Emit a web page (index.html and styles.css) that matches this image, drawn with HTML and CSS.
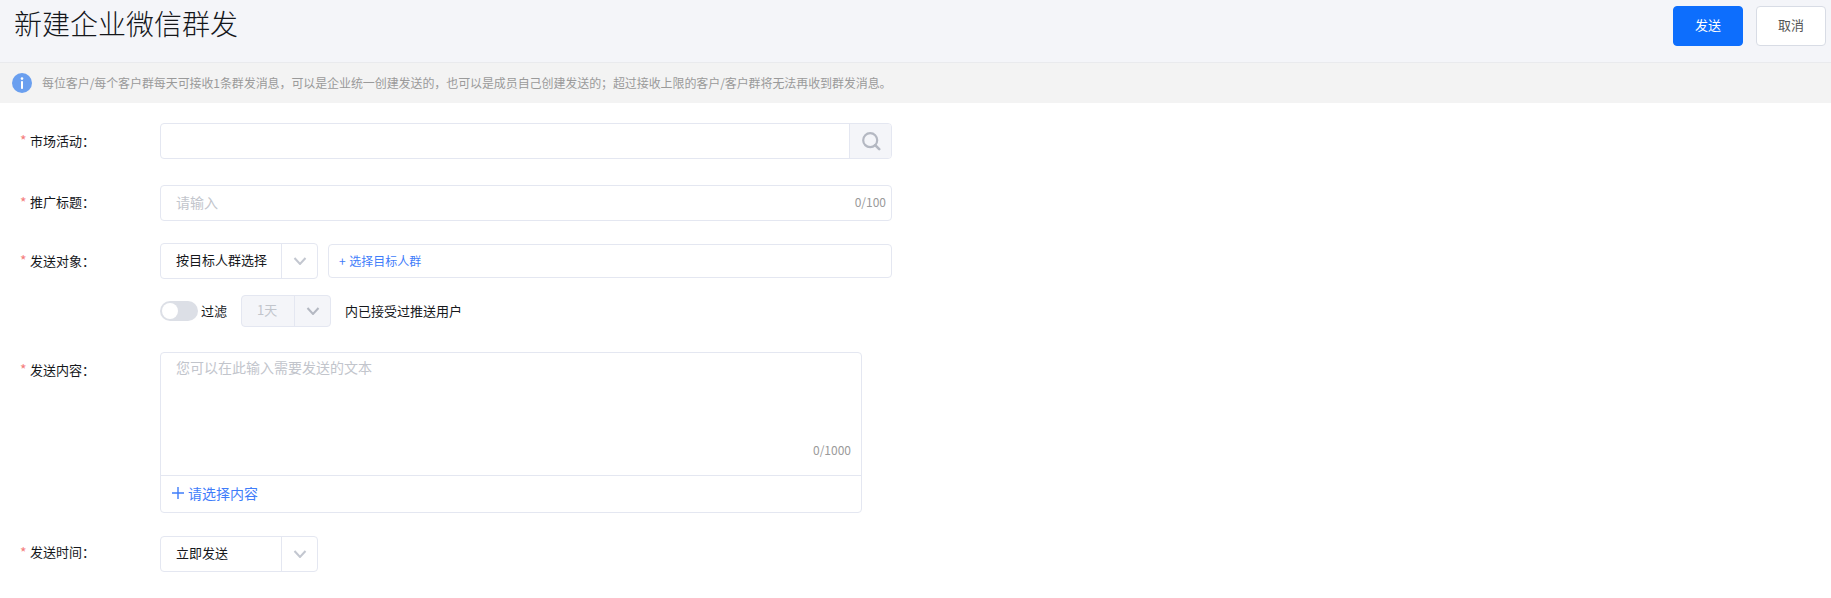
FILE: index.html
```html
<!DOCTYPE html>
<html lang="zh-CN">
<head>
<meta charset="utf-8">
<title>新建企业微信群发</title>
<link rel="stylesheet" href="styles.css">
</head>
<body>
<header class="page-header">
  <h1 class="page-title">新建企业微信群发</h1>
  <div class="header-actions">
    <button class="btn btn-primary" type="button">发送</button>
    <button class="btn btn-default" type="button">取消</button>
  </div>
</header>
<div class="notice">
  <svg class="notice-icon" viewBox="0 0 20 20" width="20" height="20" aria-hidden="true">
    <circle cx="10" cy="10" r="10" fill="#6a9fef"/>
    <circle cx="10" cy="5.6" r="1.3" fill="#fff"/>
    <rect x="9" y="8.2" width="2" height="7.6" fill="#fff"/>
  </svg>
  <span>每位客户/每个客户群每天可接收1条群发消息，可以是企业统一创建发送的，也可以是成员自己创建发送的；超过接收上限的客户/客户群将无法再收到群发消息。</span>
</div>
<main class="form">
  <div class="row row-activity">
    <label class="label"><i class="star">*</i>市场活动：</label>
    <div class="field field-wide search">
      <div class="search-input"></div>
      <div class="search-btn">
        <svg viewBox="0 0 20 20" width="20" height="20" aria-hidden="true">
          <circle cx="9.2" cy="9.2" r="7" fill="none" stroke="#b4b8c2" stroke-width="2.2"/>
          <path d="M14.2 14.2l4 4" stroke="#b4b8c2" stroke-width="2.6" stroke-linecap="round"/>
        </svg>
      </div>
    </div>
  </div>
  <div class="row row-title">
    <label class="label label-up"><i class="star">*</i>推广标题：</label>
    <div class="field field-wide text-input">
      <span class="placeholder">请输入</span>
      <span class="count">0/100</span>
    </div>
  </div>
  <div class="row row-target">
    <label class="label"><i class="star">*</i>发送对象：</label>
    <div class="target-fields">
      <div class="select select-md">
        <span class="select-value">按目标人群选择</span>
        <span class="select-arrow"><svg viewBox="0 0 14 8" width="14" height="8" aria-hidden="true"><path d="M1.5 1l5.5 6 5.5-6" fill="none" stroke="#c3c7d0" stroke-width="2"/></svg></span>
      </div>
      <div class="target-picker">+ 选择目标人群</div>
    </div>
  </div>
  <div class="row row-filter">
    <div class="label"></div>
    <div class="filter-fields">
      <span class="switch"><span class="switch-knob"></span></span>
      <span class="filter-text">过滤</span>
      <div class="select select-disabled">
        <span class="select-value">1天</span>
        <span class="select-arrow"><svg viewBox="0 0 14 8" width="14" height="8" aria-hidden="true"><path d="M1.5 1l5.5 6 5.5-6" fill="none" stroke="#b4b8c2" stroke-width="2"/></svg></span>
      </div>
      <span class="filter-tail">内已接受过推送用户</span>
    </div>
  </div>
  <div class="row row-content">
    <label class="label label-top"><i class="star">*</i>发送内容：</label>
    <div class="content-box">
      <div class="content-text">
        <span class="placeholder">您可以在此输入需要发送的文本</span>
        <span class="count count-content">0/1000</span>
      </div>
      <div class="content-add">
        <svg viewBox="0 0 12 12" width="12" height="12" aria-hidden="true"><path d="M6 0v12M0 6h12" stroke="#3f7dfa" stroke-width="1.4"/></svg>
        <span>请选择内容</span>
      </div>
    </div>
  </div>
  <div class="row">
    <label class="label label-last"><i class="star">*</i>发送时间：</label>
    <div class="select select-md">
      <span class="select-value">立即发送</span>
      <span class="select-arrow"><svg viewBox="0 0 14 8" width="14" height="8" aria-hidden="true"><path d="M1.5 1l5.5 6 5.5-6" fill="none" stroke="#c3c7d0" stroke-width="2"/></svg></span>
    </div>
  </div>
</main>
</body>
</html>
```
FILE: styles.css
```css
* { box-sizing: border-box; }
html, body { margin: 0; padding: 0; }
body {
  background: #fff;
  color: #16181c;
  font-family: "Noto Sans CJK SC", "Liberation Sans", sans-serif;
  font-size: 13px;
  width: 1831px;
  height: 598px;
  overflow: hidden;
}
.page-header {
  height: 63px;
  background: #f4f5f9;
  border-bottom: 1px solid #e9eaed;
  display: flex;
  justify-content: space-between;
  align-items: flex-start;
  padding: 6px 5px 0 14px;
}
.page-title {
  margin: 2px 0 0;
  font-size: 28px;
  font-weight: 300;
  line-height: 30px;
  color: #15171b;
}
.header-actions { display: flex; gap: 13px; }
.btn {
  width: 70px;
  height: 40px;
  border-radius: 4px;
  font: inherit;
  font-size: 13px;
  padding: 0 0 4px;
}
.btn-primary { background: #0d6efd; border: 1px solid #0d6efd; color: #fff; }
.btn-default { background: #fff; border: 1px solid #d8dce5; color: #555; }
.notice {
  height: 40px;
  background: #f3f3f3;
  display: flex;
  align-items: center;
  gap: 10px;
  padding-left: 12px;
  font-size: 12px;
  letter-spacing: -0.09px;
  color: #9a9a9a;
  white-space: nowrap;
}
.notice span { padding-bottom: 2px; }
.notice-icon { flex: none; }
.form { padding-top: 20px; }
.row { display: flex; align-items: center; }
.row-activity { margin-bottom: 26px; }
.row-title { margin-bottom: 22px; }
.row-target { margin-bottom: 16px; }
.row-filter { margin-bottom: 25px; }
.row-content { margin-bottom: 23px; align-items: flex-start; }
.label {
  width: 160px;
  flex: none;
  padding: 0 0 2px 20px;
  font-size: 13px;
  display: flex;
  align-items: center;
}
.label-up { padding-bottom: 3px; }
.label-top { padding-top: 7px; padding-bottom: 0; }
.label-last { padding-bottom: 5px; }
.star {
  width: 10px;
  font-style: normal;
  color: #f47c7c;
  font-size: 14px;
}
.field-wide {
  width: 732px;
  height: 36px;
  border: 1px solid #e4e7f1;
  border-radius: 4px;
  display: flex;
  align-items: center;
}
.search { overflow: hidden; }
.search-input { flex: 1; }
.search-btn {
  width: 42px;
  height: 100%;
  background: #f4f5f9;
  border-left: 1px solid #e4e7f1;
  display: flex;
  align-items: center;
  justify-content: center;
}
.text-input { padding: 0 4px 3px 15px; justify-content: space-between; }
.placeholder { font-size: 14px; color: #c2c5cc; }
.count { font-size: 12px; color: #9a9a9a; }
.text-input .count { margin-right: 1px; }
.target-fields { display: flex; align-items: center; gap: 10px; }
.select {
  display: flex;
  align-items: stretch;
  border: 1px solid #e4e7f1;
  border-radius: 4px;
  height: 36px;
  width: 158px;
}
.select-value {
  flex: 1;
  padding: 0 0 4px 15px;
  display: flex;
  align-items: center;
  font-size: 13px;
}
.select-arrow {
  width: 36px;
  flex: none;
  border-left: 1px solid #e4e7f1;
  display: flex;
  align-items: center;
  justify-content: center;
}
.target-picker {
  width: 564px;
  height: 34px;
  border: 1px solid #e4e7f1;
  border-radius: 4px;
  padding: 0 0 2px 10px;
  display: flex;
  align-items: center;
  font-size: 12px;
  word-spacing: 1px;
  color: #3f7dfa;
}
.filter-fields { display: flex; align-items: center; }
.switch {
  width: 38px;
  height: 20px;
  border-radius: 10px;
  background: #dcdfe6;
  padding: 2px;
  display: block;
}
.switch-knob {
  display: block;
  width: 16px;
  height: 16px;
  border-radius: 50%;
  background: #fff;
}
.filter-text { margin: 0 0 2px 3px; width: 40px; }
.select-disabled {
  width: 90px;
  height: 32px;
  background: #f4f5f9;
  color: #c2c5cc;
}
.filter-tail { margin: 0 0 2px 14px; }
.content-box {
  width: 702px;
  height: 161px;
  border: 1px solid #e4e7f1;
  border-radius: 4px;
  display: flex;
  flex-direction: column;
}
.content-text {
  flex: 1;
  padding: 4px 10px 0 15px;
  border-bottom: 1px solid #e4e7f1;
  display: flex;
  flex-direction: column;
  justify-content: space-between;
}
.count-content { align-self: flex-end; padding-bottom: 17px; }
.content-add {
  height: 36px;
  flex: none;
  padding: 0 0 2px 11px;
  display: flex;
  align-items: center;
  gap: 4px;
  font-size: 14px;
  color: #3f7dfa;
}
```
